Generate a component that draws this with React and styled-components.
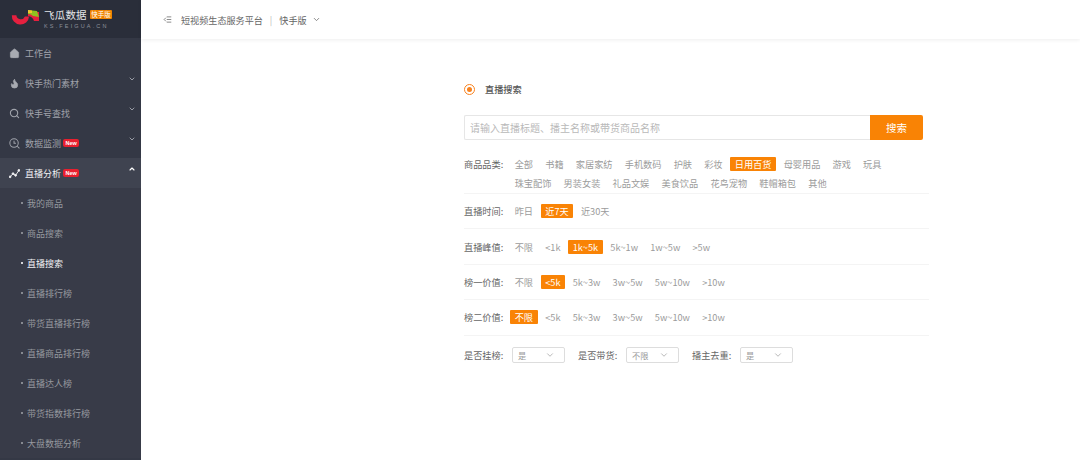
import React from "react";
import styled, { createGlobalStyle } from "styled-components";
import { ChevronDown, ChevronUp, Search, Flame, Home, Outdent } from "lucide-react";

const GlobalStyle = createGlobalStyle`
  html, body { margin: 0; padding: 0; background: #fff; }
  body { font-family: "Noto Sans CJK SC", "Liberation Sans", sans-serif; overflow: hidden; }
  * { box-sizing: border-box; }
`;

const categories = [
  ["全部", "书籍", "家居家纺", "手机数码", "护肤", "彩妆", "日用百货", "母婴用品", "游戏", "玩具"],
  ["珠宝配饰", "男装女装", "礼品文娱", "美食饮品", "花鸟宠物", "鞋帽箱包", "其他"],
];

const filterRows = [
  { label: "直播时间:", options: ["昨日", "近7天", "近30天"], active: "近7天" },
  { label: "直播峰值:", options: ["不限", "<1k", "1k~5k", "5k~1w", "1w~5w", ">5w"], active: "1k~5k" },
  { label: "榜一价值:", options: ["不限", "<5k", "5k~3w", "3w~5w", "5w~10w", ">10w"], active: "<5k" },
  { label: "榜二价值:", options: ["不限", "<5k", "5k~3w", "3w~5w", "5w~10w", ">10w"], active: "不限" },
];

const subMenu = ["我的商品", "商品搜索", "直播搜索", "直播排行榜", "带货直播排行榜", "直播商品排行榜", "直播达人榜", "带货指数排行榜", "大盘数据分析"];

function App() {
  return (
    <Page>
      <GlobalStyle />
      <Sidebar>
        <Brand>
          <svg width="32" height="22" viewBox="0 0 32 22">
            <path d="M1 6.5 A10.5 10.5 0 0 0 22 8 L31 8 A 0 0 0 0 0 31 8 L22 8 L17 8 A5.5 5.5 0 0 1 6.5 6.5 Z" fill="#e5203f" transform="translate(3 2) scale(.82)" />
            <path d="M20 4 L31 4 L31 13 L26 13 A7 7 0 0 0 20 8 Z" fill="#e5203f" />
            <path d="M20 2 L29 3 L31 9 L25 8 A6 6 0 0 0 20 6 Z" fill="#8fc31f" />
            <path d="M20 2 L24 2.5 L24 5 L20 5 Z" fill="#f2c230" />
          </svg>
          <BrandText>
            <BrandTop>
              <BrandName>飞瓜数据</BrandName>
              <BrandTag>快手版</BrandTag>
            </BrandTop>
            <BrandSub>KS.FEIGUA.CN</BrandSub>
          </BrandText>
        </Brand>
        <MenuItem>
          <Home size={11} fill="#a8abb2" strokeWidth={1.5} />
          <span>工作台</span>
        </MenuItem>
        <MenuItem>
          <Flame size={11} fill="#a8abb2" strokeWidth={1.5} />
          <span>快手热门素材</span>
          <Caret><ChevronDown size={8} strokeWidth={3} /></Caret>
        </MenuItem>
        <MenuItem>
          <Search size={11} strokeWidth={2.4} />
          <span>快手号查找</span>
          <Caret><ChevronDown size={8} strokeWidth={3} /></Caret>
        </MenuItem>
        <MenuItem>
          <svg width="11" height="11" viewBox="0 0 12 12" fill="none" stroke="currentColor" strokeWidth="1.1">
            <circle cx="5.5" cy="5.5" r="4.6" />
            <path d="M5.5 3 V5.8 L7.6 5.8 M9 9 L11.4 11.4" />
          </svg>
          <span>数据监测</span>
          <NewBadge>New</NewBadge>
          <Caret><ChevronDown size={8} strokeWidth={3} /></Caret>
        </MenuItem>
        <MenuItem $open>
          <svg width="11" height="11" viewBox="0 0 12 12" fill="none" stroke="currentColor" strokeWidth="1">
            <path d="M1.2 9.6 L4.4 6.2 L7.2 8 L10.8 2.6" />
            <circle cx="1.2" cy="9.6" r="1" fill="currentColor" />
            <circle cx="4.4" cy="6.2" r="1" fill="currentColor" />
            <circle cx="7.2" cy="8" r="1" fill="currentColor" />
            <circle cx="10.8" cy="2.6" r="1" fill="currentColor" />
          </svg>
          <span>直播分析</span>
          <NewBadge>New</NewBadge>
          <Caret $open><ChevronUp size={8} strokeWidth={3.5} /></Caret>
        </MenuItem>
        <SubMenu>
          {subMenu.map((name) => (
            <SubItem key={name} $current={name === "直播搜索"}>{name}</SubItem>
          ))}
        </SubMenu>
      </Sidebar>
      <Main>
        <TopBar>
          <Outdent size={9} color="#666" strokeWidth={2} />
          <Crumb>短视频生态服务平台</Crumb>
          <Divider>|</Divider>
          <Crumb>快手版</Crumb>
          <ChevronDown size={9} color="#666" />
        </TopBar>
        <Content>
          <RadioRow>
            <Radio />
            <RadioLabel>直播搜索</RadioLabel>
          </RadioRow>
          <SearchBar>
            <SearchInput placeholder="请输入直播标题、播主名称或带货商品名称" readOnly />
            <SearchButton>搜索</SearchButton>
          </SearchBar>
          <CategoryRow>
            <RowLabel>商品品类:</RowLabel>
            <div>
              {categories.map((line) => (
                <CategoryLine key={line[0]}>
                  {line.map((name) => (
                    <Tag key={name} $active={name === "日用百货"}>{name}</Tag>
                  ))}
                </CategoryLine>
              ))}
            </div>
          </CategoryRow>
          {filterRows.map((row) => (
            <FilterRow key={row.label}>
              <RowLabel>{row.label}</RowLabel>
              {row.options.map((option) => (
                <Tag key={option} $active={option === row.active}>{option}</Tag>
              ))}
            </FilterRow>
          ))}
          <SelectRow>
            <SelectLabel>是否挂榜:</SelectLabel>
            <Select>是<ChevronDown size={10} strokeWidth={1.4} /></Select>
            <SelectLabel>是否带货:</SelectLabel>
            <Select>不限<ChevronDown size={10} strokeWidth={1.4} /></Select>
            <SelectLabel>播主去重:</SelectLabel>
            <Select>是<ChevronDown size={10} strokeWidth={1.4} /></Select>
          </SelectRow>
        </Content>
      </Main>
    </Page>
  );
}

const Page = styled.div`
  display: flex;
  width: 1080px;
  height: 460px;
  overflow: hidden;
`;
const Sidebar = styled.aside`
  width: 141px;
  flex-shrink: 0;
  background: #343845;
  color: #a0a3ab;
  font-size: 9px;
`;
const Brand = styled.div`
  height: 38px;
  background: #2a2e3a;
  display: flex;
  align-items: center;
  padding-left: 8px;
  gap: 4px;
`;
const BrandText = styled.div`
  display: flex;
  flex-direction: column;
`;
const BrandTop = styled.div`
  display: flex;
  align-items: center;
  gap: 3px;
  height: 14px;
`;
const BrandName = styled.span`
  color: #e4e5e8;
  font-size: 10.5px;
  letter-spacing: 0.2px;
`;
const BrandTag = styled.span`
  background: #f08300;
  color: #fff;
  font-size: 6.5px;
  line-height: 9px;
  padding: 0 1.5px;
  border-radius: 1px;
`;
const BrandSub = styled.span`
  color: #8d909a;
  font-family: "Liberation Sans", sans-serif;
  font-size: 5.5px;
  letter-spacing: 2.15px;
  line-height: 9px;
`;
const MenuItem = styled.div`
  height: 30px;
  display: flex;
  align-items: center;
  padding-left: 9px;
  gap: 5px;
  position: relative;
  background: ${(p) => (p.$open ? "#3f4350" : "transparent")};
  color: ${(p) => (p.$open ? "#f2f2f4" : "#a0a3ab")};
  svg { flex-shrink: 0; }
`;
const Caret = styled.span`
  position: absolute;
  right: 5px;
  top: 7px;
  display: flex;
  color: ${(p) => (p.$open ? "#fff" : "#9a9da6")};
`;
const NewBadge = styled.span`
  background: #e8202f;
  color: #fff;
  font-family: "Liberation Sans", sans-serif;
  font-size: 5.5px;
  font-weight: 700;
  line-height: 8px;
  padding: 0 2.5px;
  border-radius: 2px;
  margin-left: -3px;
`;
const SubMenu = styled.div`
  background: #383b48;
`;
const SubItem = styled.div`
  height: 30px;
  display: flex;
  align-items: center;
  padding-left: 21px;
  gap: 3px;
  color: ${(p) => (p.$current ? "#f2f2f4" : "#96999f")};
  &::before {
    content: "";
    width: 1.5px;
    height: 1.5px;
    border-radius: 50%;
    background: currentColor;
    margin-right: 1.5px;
  }
`;
const Main = styled.main`
  flex: 1;
  min-width: 0;
`;
const TopBar = styled.header`
  height: 39px;
  display: flex;
  align-items: center;
  padding-left: 22px;
  gap: 5px;
  color: #666;
  font-size: 9.1px;
  box-shadow: 0 1px 4px rgba(0, 0, 0, 0.07);
`;
const Crumb = styled.span`
  &:first-of-type { margin-left: 4px; }
`;
const Divider = styled.span`
  color: #bbb;
  margin: 0 2px;
`;
const Content = styled.div`
  width: 465px;
  margin-left: 323px;
  padding-top: 41px;
  color: #666;
  font-size: 9.2px;
`;
const RadioRow = styled.div`
  display: flex;
  align-items: center;
  height: 18px;
  gap: 10px;
`;
const Radio = styled.span`
  width: 11px;
  height: 11px;
  border-radius: 50%;
  border: 1px solid #f8821e;
  display: flex;
  align-items: center;
  justify-content: center;
  &::after {
    content: "";
    width: 5px;
    height: 5px;
    border-radius: 50%;
    background: #f8821e;
  }
`;
const RadioLabel = styled.span`
  color: #555;
  font-weight: 500;
`;
const SearchBar = styled.div`
  display: flex;
  width: 459px;
  height: 25px;
  margin-top: 17px;
`;
const SearchInput = styled.input`
  flex: 1;
  min-width: 0;
  border: 1px solid #e6e6e6;
  border-right: none;
  border-radius: 2px 0 0 2px;
  padding: 0 5px;
  font: inherit;
  font-size: 10px;
  outline: none;
  &::placeholder { color: #b9b9b9; }
`;
const SearchButton = styled.button`
  width: 53px;
  border: none;
  border-radius: 0 2px 2px 0;
  background: #f98305;
  color: #fff;
  font: inherit;
  font-size: 10.5px;
  padding: 0;
`;
const RowLabel = styled.span`
  width: 46px;
  flex-shrink: 0;
  color: #666;
  white-space: nowrap;
`;
const Tag = styled.span`
  height: 14px;
  line-height: 14px;
  padding: 0 4.7px;
  margin-right: 2.8px;
  white-space: nowrap;
  border-radius: 1px;
  background: ${(p) => (p.$active ? "#f98305" : "transparent")};
  color: ${(p) => (p.$active ? "#fff" : "#9b9b9b")};
`;
const CategoryRow = styled.div`
  display: flex;
  padding: 17px 0 4px;
  height: 54px;
  border-bottom: 1px solid #f4f4f4;
  line-height: 14px;
`;
const CategoryLine = styled.div`
  display: flex;
  height: 19px;
  align-items: flex-start;
`;
const FilterRow = styled.div`
  display: flex;
  align-items: center;
  height: 35.4px;
  border-bottom: 1px solid #f4f4f4;
`;
const SelectRow = styled.div`
  display: flex;
  align-items: center;
  height: 38px;
`;
const SelectLabel = styled.span`
  width: 48px;
  white-space: nowrap;
  &:not(:first-child) { margin-left: 13px; }
`;
const Select = styled.div`
  width: 53px;
  height: 16px;
  border: 1px solid #ddd;
  border-radius: 2px;
  display: flex;
  align-items: center;
  justify-content: space-between;
  padding: 0 9px 0 5px;
  font-size: 8.2px;
  color: #999;
  svg { color: #888; }
`;

export default App;
